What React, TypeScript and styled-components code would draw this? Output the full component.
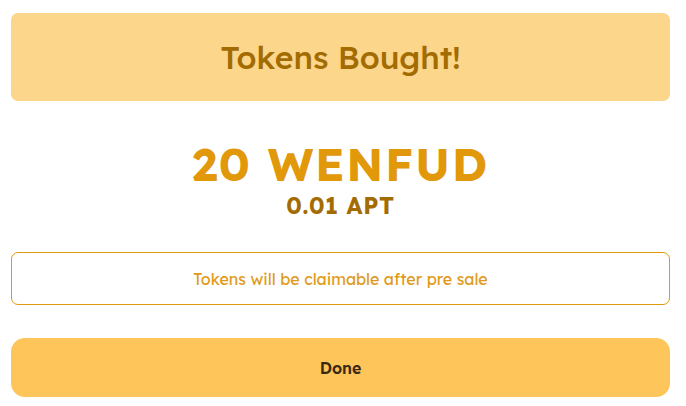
import styled, { createGlobalStyle } from "styled-components";

const GlobalStyle = createGlobalStyle`
  html, body {
    margin: 0;
    padding: 0;
    background: #ffffff;
    font-family: "Lexend", Inter, "Noto Sans", sans-serif;
  }
`;

const Modal = styled.div`
  width: 686px;
  box-sizing: border-box;
  padding: 13px 16px 0 11px;
  display: flex;
  flex-direction: column;
`;

const Header = styled.div`
  height: 88px;
  border-radius: 7px;
  background: #fcd68a;
  display: flex;
  align-items: center;
  justify-content: center;
`;

const Title = styled.h2`
  margin: 0;
  font-size: 32px;
  font-weight: 500;
  color: #a26c02;
`;

const Amounts = styled.div`
  display: flex;
  flex-direction: column;
  align-items: center;
  margin-top: 36px;
`;

const TokenAmount = styled.div`
  font-size: 46px;
  font-weight: 700;
  line-height: 54px;
  color: #e1980a;
  letter-spacing: 1.6px;
`;

const PriceAmount = styled.div`
  font-size: 23px;
  font-weight: 700;
  line-height: 30px;
  color: #a26c02;
  letter-spacing: 0.6px;
`;

const Notice = styled.div`
  margin-top: 31px;
  height: 53px;
  box-sizing: border-box;
  border: 1px solid #e09a10;
  border-radius: 7px;
  display: flex;
  align-items: center;
  justify-content: center;
  font-size: 16px;
  color: #e09a1a;
`;

const DoneButton = styled.button`
  margin-top: 33px;
  height: 59px;
  border: none;
  border-radius: 14px;
  background: #fdc55a;
  font-family: inherit;
  font-size: 16px;
  font-weight: 600;
  color: #3a2810;
  cursor: pointer;
`;

export default function App() {
  return (
    <>
      <GlobalStyle />
      <Modal>
        <Header>
          <Title>Tokens Bought!</Title>
        </Header>
        <Amounts>
          <TokenAmount>20 WENFUD</TokenAmount>
          <PriceAmount>0.01 APT</PriceAmount>
        </Amounts>
        <Notice>Tokens will be claimable after pre sale</Notice>
        <DoneButton>Done</DoneButton>
      </Modal>
    </>
  );
}
